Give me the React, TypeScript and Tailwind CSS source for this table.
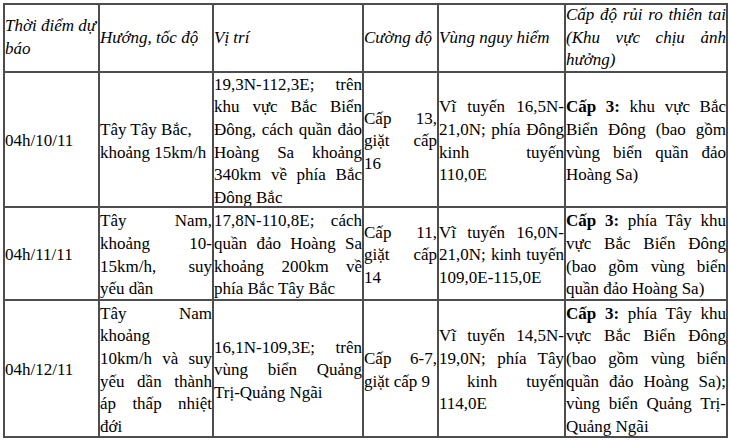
import React from "react";

type Line = { t: React.ReactNode; j?: boolean; cls?: string };

const J = (t: React.ReactNode, cls = ""): Line => ({ t, j: true, cls });
const L = (t: React.ReactNode, cls = ""): Line => ({ t, cls });

const B = (s: string) => <span className="font-bold">{s}</span>;

const Cell: React.FC<{ lines: Line[]; head?: boolean }> = ({ lines, head }) => (
  <div
    className={`bg-white flex flex-col justify-center overflow-hidden ${head ? "italic" : "pt-[4px]"}`}
  >
    {lines.map((l, i) => (
      <div
        key={i}
        className={`${l.j ? "text-justify [text-align-last:justify]" : "text-left"} ${l.cls ?? ""}`}
      >
        {l.t}
      </div>
    ))}
  </div>
);

const rows: Line[][][] = [
  [
    [L("Thời điểm dự", "whitespace-nowrap"), L("báo")],
    [L("Hướng, tốc độ")],
    [L("Vị trí")],
    [L("Cường độ")],
    [L("Vùng nguy hiểm")],
    [J("Cấp độ rủi ro thiên tai"), J("(Khu vực chịu ảnh"), L("hưởng)")],
  ],
  [
    [L("04h/10/11")],
    [L("Tây Tây Bắc,"), L("khoảng 15km/h")],
    [
      J("19,3N-112,3E; trên"),
      J("khu vực Bắc Biển"),
      J("Đông, cách quần đảo"),
      J("Hoàng Sa khoảng"),
      J("340km về phía Bắc"),
      L("Đông Bắc"),
    ],
    [J("Cấp 13,"), J("giặt cấp"), L("16")],
    [J("Vĩ tuyến 16,5N-"), J("21,0N; phía Đông"), J("kinh tuyến"), L("110,0E")],
    [
      J(<>{B("Cấp 3:")} khu vực Bắc</>),
      J("Biển Đông (bao gồm"),
      J("vùng biển quần đảo"),
      L("Hoàng Sa)"),
    ],
  ],
  [
    [L("04h/11/11")],
    [J("Tây Nam,"), J("khoảng 10-"), J("15km/h, suy"), L("yếu dần")],
    [
      J("17,8N-110,8E; cách"),
      J("quần đảo Hoàng Sa"),
      J("khoảng 200km về"),
      L("phía Bắc Tây Bắc"),
    ],
    [J("Cấp 11,"), J("giặt cấp"), L("14")],
    [J("Vĩ tuyến 16,0N-"), J("21,0N; kinh tuyến"), L("109,0E-115,0E")],
    [
      J(<>{B("Cấp 3:")} phía Tây khu</>),
      J("vực Bắc Biển Đông"),
      J("(bao gồm vùng biển"),
      L("quần đảo Hoàng Sa)"),
    ],
  ],
  [
    [L("04h/12/11")],
    [
      J("Tây Nam"),
      L("khoảng"),
      J("10km/h và suy"),
      J("yếu dần thành"),
      J("áp thấp nhiệt"),
      L("đới"),
    ],
    [J("16,1N-109,3E; trên"), J("vùng biển Quảng"), L("Trị-Quảng Ngãi")],
    [J("Cấp 6-7,"), L("giặt cấp 9")],
    [
      J("Vĩ tuyến 14,5N-"),
      J("19,0N; phía Tây"),
      J("kinh tuyến", "pl-[28px]"),
      L("114,0E"),
    ],
    [
      J(<>{B("Cấp 3:")} phía Tây khu</>),
      J("vực Bắc Biển Đông"),
      J("(bao gồm vùng biển"),
      J("quần đảo Hoàng Sa);"),
      J("vùng biển Quảng Trị-"),
      L("Quảng Ngãi"),
    ],
  ],
];

export default function App() {
  return (
    <div className="w-[730px] h-[440px] bg-white overflow-hidden pt-[3px] pl-[3px]">
      <div className="grid w-max grid-cols-[93px_112px_148px_73px_125px_160px] grid-rows-[66px_133px_91px_135px] gap-[2px] bg-[#4d4d4d] p-[2px] font-['Liberation_Serif','Times_New_Roman',serif] text-[17px] leading-[22.6px] text-black">
        {rows.map((r, ri) =>
          r.map((c, ci) => <Cell key={`${ri}-${ci}`} lines={c} head={ri === 0} />)
        )}
      </div>
    </div>
  );
}
